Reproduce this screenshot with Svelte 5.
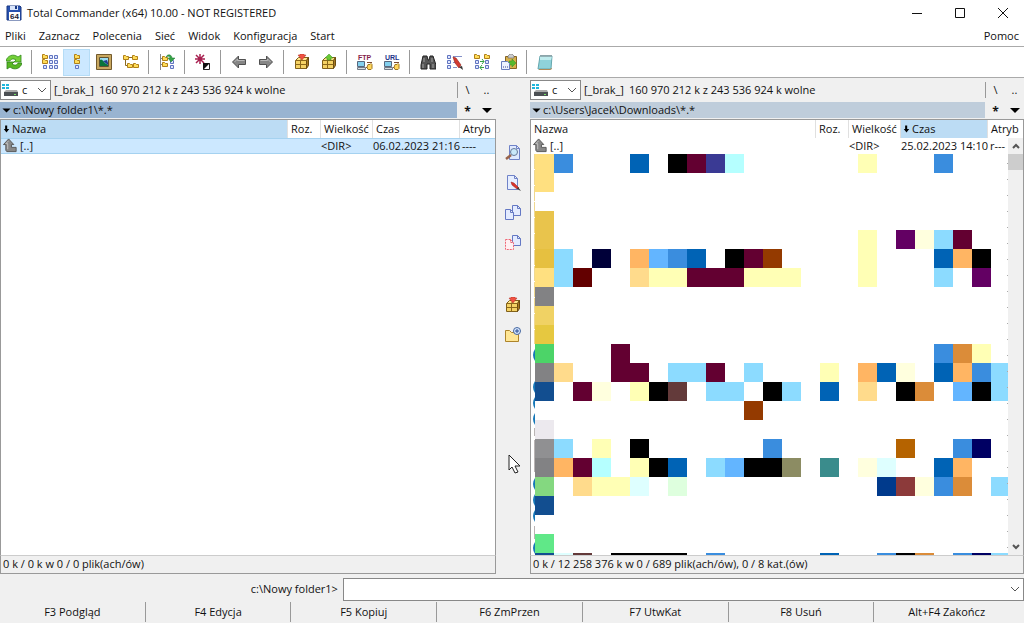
<script>
  let command = $state('')

  const menu = ['Pliki', 'Zaznacz', 'Polecenia', 'Sieć', 'Widok', 'Konfiguracja', 'Start']
  const keys = ['F3 Podgląd', 'F4 Edycja', 'F5 Kopiuj', 'F6 ZmPrzen', 'F7 UtwKat', 'F8 Usuń', 'Alt+F4 Zakończ']

  const toolbar = [
    ['refresh', 'Odśwież'], null,
    ['brief', 'Skrócony'], ['full', 'Pełny'], ['thumbs', 'Miniatury'], ['tree', 'Drzewo'], null,
    ['branch', 'Gałąź'], null,
    ['invert', 'Odwróć zaznaczenie'], null,
    ['back', 'Wstecz'], ['forward', 'Dalej'], null,
    ['pack', 'Spakuj'], ['unpack', 'Rozpakuj'], null,
    ['ftp', 'Połącz FTP'], ['url', 'Nowe FTP'], null,
    ['search', 'Szukaj'], ['rename', 'Wielozmiana nazw'], ['sync', 'Synchronizuj'], ['clip', 'Kopiuj nazwy'], null,
    ['notepad', 'Notatnik']
  ]

  const middle = [
    ['view', 'Podgląd'], ['edit', 'Edycja'], ['copy', 'Kopiuj'], ['move', 'Przenieś'], null,
    ['pack', 'Spakuj'], ['mkdir', 'Utwórz katalog']
  ]

  const panels = [
    { id: 'left', path: 'c:\\Nowy folder1\\*.*', sort: 'Nazwa', date: '06.02.2023 21:16', attr: '----', active: true, status: '0 k / 0 k w 0 / 0 plik(ach/ów)' },
    { id: 'right', path: 'c:\\Users\\Jacek\\Downloads\\*.*', sort: 'Czas', date: '25.02.2023 14:10', attr: 'r---', active: false, status: '0 k / 12 258 376 k w 0 / 689 plik(ach/ów), 0 / 8 kat.(ów)' }
  ]
  const columns = [['Nazwa', 'name'], ['Roz.', 'ext'], ['Wielkość', 'size'], ['Czas', 'time'], ['Atryb', 'attr']]

  // one letter per tile, a dot is an empty tile
  const palette = {
    a: '#ffe080', b: '#e9c44c', c: '#e6c040', d: '#f0d264', e: '#e6c840', g: '#828284', h: '#909092', i: '#ece9ee',
    j: '#4cd468', k: '#84d880', l: '#60e888', n: '#124e90',
    A: '#3a8dde', B: '#0063b5', K: '#000000', M: '#630031', V: '#3a3a94', C: '#b5ffff', Y: '#ffffb5', P: '#630063',
    L: '#ffffde', S: '#8cdbff', N: '#000039', O: '#ffb563', T: '#63b5ff', R: '#943a00', D: '#630000', F: '#ffdb8c',
    G: '#db8c39', W: '#633a3a', Q: '#b56300', U: '#000063', X: '#8c8c63', Z: '#3a8c8c', t: '#deffff', u: '#deffde',
    v: '#003a8c', w: '#8c3a3a'
  }
  const tiles = [
    'aA...B.KMVC......Y...A...',
    'a........................',
    '.........................',
    'b........................',
    'b................Y.PLSM..',
    'cS.N.OTAB.KMR....Y...BOK.',
    'aSD..FYYMMMYYY...Y...S.P.',
    'g........................',
    'd........................',
    'e........................',
    'j...M................AGY.',
    'gF..MM.SSM.S...Y.OBL.BOAS',
    'n.ML.YKW.SS.KS.B.F.KG.TKS',
    '...........R.............',
    'i........................',
    'hS.Y.K......A......Q..AU.',
    'gOMC.YKB.STKKX.Z.Lt..BO..',
    'k.FYYt.u..........vwLAG.S',
    'n........................',
    '.........................',
    'l........................',
    'ntW.KKKK.A.....B..AKG.AUS'
  ]
  const marks = [355, 387, 403, 419, 484, 500, 516, 548]

  // small pieces shared by the icons
  const folder = (x, y) => `<path d="M${x}.5 ${y}.5h2l1 1h2v3h-5z" fill="#ffdc58" stroke="#b08018"/>`
  const page = (x, y) => `<path d="M${x}.5 ${y}.5h3v3h-3z" fill="#dfe6ff" stroke="#6074c0"/>`
  const sheet = (x, y, fill = '#e3ebff', line = '#6478c4', dash = '') => `<path d="M${x}.5 ${y}.5h5l3 3v7h-8z M${x + 5}.5 ${y}.5v3h3" fill="${fill}" stroke="${line}" ${dash}/>`
  const box = '<path d="M1.500 6.500l3-3h10l-2 3v8h-11z" fill="#ffe68c" stroke="#80601a"/><path d="M12.500 6.500l2-3v8l-2 3z" fill="#a87a24" stroke="#6a4c10"/><path d="M2 7h10v3H2zM2 11h10v3H2z" fill="#f5d264"/><path d="M1.500 6.500h11M1.500 10.500h11M7.500 4l-1 3v7.500" stroke="#8c681a" fill="none"/>'
  const net = '<path d="M.500 7.500h7v5h-7z" fill="#83d0ee" stroke="#56677e"/><path d="M.500 13.500h8v2h-8z" fill="#d6dbe1" stroke="#727b86"/><path d="M9 13.500h2M10 8.500h5" stroke="#7a4a30"/><path d="M11 10.500h2l1-1 1 1v4l-1 1h-3l-1-2z" fill="#ffd65c" stroke="#a07820"/>'

  const icons = {
    refresh: '<path d="M0 7C1 2 7-1 12 3l3-2v7H8l2-2C7 4 5 5 4 7z" fill="#74d038" stroke="#318a19" stroke-width=".8"/><path d="M16 9c-1 5-7 8-12 4l-3 2V8h7l-2 2c3 2 5 1 6-1z" fill="#58b824" stroke="#2c8118" stroke-width=".8"/>',
    brief: folder(0, 0) + folder(0, 5) + page(1, 11) + [7, 12].map((x) => page(x, 1) + page(x, 6) + page(x, 11)).join(''),
    full: folder(5, 0) + folder(5, 5) + page(6, 11),
    thumbs: '<path d="M.500 .500h15v15H.500z" fill="#c9a860" stroke="#735a2d"/><path d="M3.500 3.500h9v9h-9z" fill="#9adcf4" stroke="#5d5232"/><path d="M4 12V6c2-2 3 2 8 5v1z" fill="#08743c"/><path d="M7 7l4-1 1 3v2z" fill="#203c8c"/>',
    tree: '<path d="M2.500 5v6.500H5M3 3.500h7M8.500 11.500H11" stroke="#8a6a20" fill="none"/>' + folder(0, 1) + folder(9, 1) + folder(4, 9) + folder(10, 9),
    branch: '<path d="M1.500 0v16M2 4.500h2M2 10.500h2" stroke="#888" fill="none"/>' + folder(3, 2) + folder(3, 8) + page(11, 6) + page(11, 11) + '<path d="M7 3c2-4 6-2 6 1h3l-4 4-3-4h2c0-2-2-2-4-1z" fill="#36a247" stroke="#1c7a30" stroke-width=".5"/>',
    invert: '<path d="M5 0v10M0 5h10M1 1l8 8M9 1L1 9" stroke="#a82050" stroke-width="1.500"/><circle cx="5" cy="5" r="2" fill="#a82050"/><path d="M8.500 9.500h6v6h-6z" fill="#fff" stroke="#222"/><path d="M8 16V9h7z" fill="#111"/>',
    back: '<path d="M1.500 8l6-6v3.500h7v5h-7V14z" fill="#868686" stroke="#505050"/><path d="M3.500 8l3-3v1.500h7" stroke="#b8b8b8" fill="none"/>',
    forward: '<path d="M14.500 8l-6-6v3.500h-7v5h7V14z" fill="#868686" stroke="#505050"/><path d="M2.500 6.500h7V5l3 3" stroke="#b8b8b8" fill="none"/>',
    pack: box + '<path d="M4 1h2V0h4v1h2L8 6z" fill="#ef5142" stroke="#b73025" stroke-width=".5"/>',
    unpack: box + '<path d="M8 0l4 4h-2v2H6V4H4z" fill="#6bc934" stroke="#378d20" stroke-width=".5"/>',
    ftp: net + '<text x="1" y="6" font-size="7" font-weight="bold" font-family="Liberation Sans" fill="#851e4b">FTP</text>',
    url: net + '<text x="1" y="6" font-size="7" font-weight="bold" font-family="Liberation Sans" fill="#24358a">URL</text>',
    search: '<path d="M3 2h4l1 4h1l1-4h3l3 9v4h-6v-5H7v5H1v-4z" fill="#555" stroke="#222"/><path d="M4 4v4M12 4v4M3 10v4M13 10v4" stroke="#a2a2a2"/>',
    rename: page(0, 1) + page(0, 6) + page(0, 11) + '<path d="M6 2.500h9M6 8.500h2M6 13.500h4" stroke="#8490c8"/><path d="M6 3l3 1 5 7-2 3-4-5z" fill="#d33b31" stroke="#912018" stroke-width=".6"/><path d="M12 13l4 3-1-4z" fill="#333"/>',
    sync: folder(0, 0) + folder(10, 0) + [6, 11].map((y) => page(1, y) + page(11, y)).join('') + '<path d="M6 7.500h4M8 5l2 2.500L8 10M10 13.500H6M8 11l-2 2.500L8 16" fill="none" stroke="#35a346"/>',
    clip: '<path d="M4.500 2.500h11v12h-11z" fill="#d8b04c" stroke="#866322"/><path d="M7 4V2l2-2h2l2 2v2z" fill="#ccc" stroke="#666" stroke-width=".6"/><path d="M8 7h3V5l4 4-4 4v-2H8z" fill="#56b92c" stroke="#378d20" stroke-width=".5"/><path d="M.500 7.500h6l2 2v6h-8z" fill="#edf2ff" stroke="#687bbd"/><path d="M2 13h5" stroke="#39408b" stroke-dasharray="1 1"/>',
    notepad: '<path d="M3 2h12l-1 13H1z" fill="#8fd2da" stroke="#65a7ae"/><path d="M3 2h12l-1 4H3z" fill="#bfecee"/><path d="M4 1v2M6 1v2M8 1v2M10 1v2M12 1v2M14 1v2" stroke="#66777c"/><path d="M2 15.500h11l2-1" fill="none" stroke="#b18a57"/>',
    view: '<path d="M4.500 .500h7l3 3v11h-10z M11.500 .500v3h3" fill="#dfe9ff" stroke="#6f82c8"/><circle cx="9" cy="7" r="3.500" fill="#c9e8fa" stroke="#667998"/><path d="M6 10l-5 4" stroke="#98634a" stroke-width="2.500"/>',
    edit: '<path d="M2.500 .500h7l3 3v11h-10z M9.500 .500v3h3" fill="#e6eeff" stroke="#6f82c8"/><path d="M6 7l3 1 5 5-2 1-5-4z" fill="#da332b" stroke="#9a211b" stroke-width=".5"/><path d="M13 12l3 4-4-2z" fill="#333"/>',
    copy: sheet(7, 0) + sheet(0, 4),
    move: sheet(7, 0) + sheet(0, 4, '#fff0f2', '#ef6675', 'stroke-dasharray="2 1"'),
    mkdir: '<path d="M.500 3.500h4l2 2h7v9h-13z" fill="#ffe694" stroke="#ad842b"/><circle cx="12" cy="4" r="3.500" fill="#d8e8ff" stroke="#45669e"/><path d="M12 2v4M10 4h4" stroke="#294c94"/>',
    up: '<path d="M6 1l5.500 6H9v3h5v4.500H4L3 13V7H.500z" fill="#888" stroke="#555"/><path d="M6 3L3 6h2v6" fill="none" stroke="#c4c4c4"/>',
    drive: '<path d="M0 1h3v2H0zM4 1h3v2H4zM0 4h3v2H0zM4 4h3v2H4z" fill="#20b6dc"/><path d="M2 9l2-2h11l1 2z" fill="#aaa"/><path d="M2 9h14v4H2z" fill="#4c5054"/><path d="M12 11.500h2" stroke="#79e66a"/>',
    disk: '<path d="M1 1h13l1 1v13H1z" fill="#2852b0" stroke="#183782"/><path d="M4 1h8v4H4z" fill="#d9e5fa"/><path d="M9 1h2v3H9z" fill="#183782"/><path d="M3 7h11v8H3z" fill="#fff"/><text x="4" y="14" font-size="8" font-weight="bold" font-family="Liberation Sans" fill="#223">64</text>',
    down: '<path d="M4 6l4 4 4-4" fill="none" stroke="#555"/>',
    scrollUp: '<path d="M5 10l3-3 3 3" fill="none" stroke="#555" stroke-width="2"/>',
    scrollDown: '<path d="M5 6l3 3 3-3" fill="none" stroke="#555" stroke-width="2"/>',
    triangle: '<path d="M3 6h10l-5 5z" fill="#000"/>',
    sorted: '<path d="M6 3h3v5h3l-4 5-4-5h2z" fill="#000"/>',
    minimize: '<path d="M3 8.500h10" stroke="#111"/>',
    maximize: '<path d="M3.500 3.500h9v9h-9z" fill="none" stroke="#111"/>',
    close: '<path d="M3 3l10 10M13 3L3 13" stroke="#111"/>'
  }
</script>

{#snippet icon(name)}
  <svg class="icon" viewBox="0 0 16 16" aria-hidden="true">{@html icons[name]}</svg>
{/snippet}

{#snippet filePanel(panel)}
  <section class="panel">
    <div class="drivebar">
      <div class="drive">
        {@render icon('drive')}
        <select aria-label="Dysk"><option>c</option></select>
        <span class="chevron">{@render icon('down')}</span>
      </div>
      <span class="free"><span>[_brak_]</span> <span>160 970 212 k z 243 536 924 k wolne</span></span>
      <div class="pair divided"><button>\</button><button>..</button></div>
    </div>
    <div class="pathbar">
      <button class="path" class:active={panel.active}>{@render icon('triangle')}{panel.path}</button>
      <div class="pair"><button class="star">*</button><button aria-label="Historia">{@render icon('triangle')}</button></div>
    </div>
    <div class="list">
      <table>
        <thead>
          <tr>
            {#each columns as [label, kind]}
              <th class={kind} class:sorted={panel.sort === label}>{#if panel.sort === label}{@render icon('sorted')}{/if}{label}</th>
            {/each}
          </tr>
        </thead>
        <tbody>
          <tr class:selected={panel.active}>
            <td>{@render icon('up')}[..]</td>
            <td></td>
            <td>&lt;DIR&gt;</td>
            <td>{panel.date}</td>
            <td>{panel.attr}</td>
          </tr>
        </tbody>
      </table>
      {#if panel.id === 'right'}
        <svg class="tiles" width="477" height="401" viewBox="531 154 477 401" shape-rendering="crispEdges" aria-hidden="true">
          <path d="M534.500 154V344" stroke="#f0d890" stroke-dasharray="15 1" />
          <path d="M534.500 428v8M534.500 440v32M534.500 526v13" stroke="#b9b4b4" />
          {#each marks as y}
            <path d="M535 {y - 6}q-4 6 0 12z" fill="#1477b8" shape-rendering="auto" />
          {/each}
          {#each tiles as row, r}
            {#each row as tile, c}
              {#if tile !== '.'}
                <rect x={535 + c * 19} y={154 + r * 19} width="19" height="19" fill={palette[tile]} />
              {/if}
            {/each}
          {/each}
          <path d="M1007.500 163V555" stroke="#aaa" stroke-dasharray="1 15" />
        </svg>
        <div class="scrollbar">
          <button aria-label="W górę">{@render icon('scrollUp')}</button>
          <div class="thumb"></div>
          <button aria-label="W dół">{@render icon('scrollDown')}</button>
        </div>
      {/if}
    </div>
    <div class="status">{panel.status}</div>
  </section>
{/snippet}

<div class="window">
  <header>
    {@render icon('disk')}
    <span class="title">Total Commander (x64) 10.00 - NOT REGISTERED</span>
    <button aria-label="Minimalizuj">{@render icon('minimize')}</button>
    <button aria-label="Maksymalizuj">{@render icon('maximize')}</button>
    <button aria-label="Zamknij">{@render icon('close')}</button>
  </header>

  <nav>
    {#each menu as item}
      <button>{item}</button>
    {/each}
    <button class="help">Pomoc</button>
  </nav>

  <div class="toolbar">
    {#each toolbar as tool}
      {#if tool}
        <button class:pressed={tool[0] === 'full'} aria-label={tool[1]}>{@render icon(tool[0])}</button>
      {:else}
        <span class="separator"></span>
      {/if}
    {/each}
  </div>

  <main>
    {@render filePanel(panels[0])}
    <div class="middle">
      {#each middle as tool}
        {#if tool}
          <button aria-label={tool[1]}>{@render icon(tool[0])}</button>
        {:else}
          <span class="space"></span>
        {/if}
      {/each}
      <svg class="pointer" width="13" height="20" viewBox="0 0 13 20" aria-hidden="true">
        <path d="M1 1v15l3-3 3 6 3-1-3-6h5z" fill="#fff" stroke="#222" />
      </svg>
    </div>
    {@render filePanel(panels[1])}
  </main>

  <div class="commandline">
    <label for="command">c:\Nowy folder1&gt;</label>
    <div class="field">
      <input id="command" type="text" bind:value={command} />
      <button aria-label="Historia poleceń">{@render icon('down')}</button>
    </div>
  </div>

  <footer>
    {#each keys as key}
      <button>{key}</button>
    {/each}
  </footer>
</div>

<style>
  :global(body) {
    background: #f0f0f0;
  }
  .window {
    display: flex;
    flex-direction: column;
    min-height: 100vh;
    font: 11px/16px "Open Sans", "Noto Sans", sans-serif;
    color: #111;
    background: #f0f0f0;
  }
  .window * {
    box-sizing: border-box;
  }
  button, select, input {
    margin: 0;
    padding: 0;
    border: none;
    border-radius: 0;
    background: none;
    font: inherit;
    color: inherit;
  }
  .icon {
    display: block;
    flex: none;
    width: 16px;
    height: 16px;
  }
  header {
    display: flex;
    align-items: center;
    height: 26px;
    padding-left: 6px;
    background: #fff;
  }
  .title {
    flex: 1;
    padding-left: 5px;
  }
  header button {
    display: flex;
    justify-content: center;
    width: 43px;
  }
  nav {
    display: flex;
    gap: 13px;
    height: 21px;
    padding: 0 5px;
    border-bottom: 1px solid #aaa;
    background: #fff;
  }
  .help {
    margin-left: auto;
  }
  .toolbar {
    display: flex;
    align-items: center;
    height: 31px;
    border-bottom: 1px solid #aaa;
    background: #fff;
  }
  .toolbar button {
    display: flex;
    align-items: center;
    justify-content: center;
    width: 27px;
    height: 27px;
  }
  .toolbar .pressed {
    border: 1px solid #b5dcf6;
    background: #cce8ff;
  }
  .separator {
    width: 1px;
    height: 24px;
    margin: 0 4px;
    background: #999;
  }
  main {
    flex: 1;
    display: grid;
    grid-template-columns: calc(50% - 16px) 34px 1fr;
  }
  .panel {
    display: flex;
    flex-direction: column;
    min-width: 0;
  }
  .drivebar {
    display: flex;
    align-items: center;
    height: 24px;
  }
  .drive {
    position: relative;
    width: 51px;
    height: 20px;
    border: 1px solid #888;
    background: #fff;
  }
  .drive > .icon {
    position: absolute;
    top: 2px;
    left: 1px;
    pointer-events: none;
  }
  .drive select {
    width: 100%;
    height: 100%;
    padding-left: 21px;
    appearance: none;
  }
  .chevron {
    position: absolute;
    top: 1px;
    right: 0;
    pointer-events: none;
  }
  .free {
    flex: 1;
    display: flex;
    gap: 5px;
    padding-left: 3px;
    white-space: nowrap;
  }
  .pair {
    display: flex;
    width: 39px;
    padding-left: 1px;
  }
  .divided {
    border-left: 1px solid #999;
    padding-left: 0;
  }
  .pair button {
    display: flex;
    align-items: center;
    justify-content: center;
    width: 19px;
    height: 16px;
  }
  .pair .star {
    padding-top: 4px;
    font-size: 12px;
    font-weight: bold;
  }
  .pathbar {
    display: flex;
    height: 17px;
  }
  .path {
    flex: 1;
    display: flex;
    align-items: center;
    height: 16px;
    background: #bfcddb;
  }
  .path.active {
    background: #99b4d1;
  }
  .path .icon {
    width: 13px;
  }
  .list {
    flex: 1;
    position: relative;
    overflow: hidden;
    border: 1px solid #999;
    border-bottom-color: #ccc;
    background: #fff;
  }
  table {
    width: 100%;
    table-layout: fixed;
    border-spacing: 0;
  }
  th {
    height: 18px;
    padding: 0 3px;
    border-right: 1px solid #e0e0e0;
    text-align: left;
    font-weight: normal;
    white-space: nowrap;
  }
  th:last-child {
    border-right: none;
  }
  th.sorted {
    padding-left: 0;
    background: #bcdcf4;
  }
  th .icon, td .icon {
    display: inline-block;
    vertical-align: top;
  }
  th .icon {
    width: 11px;
  }
  .ext {
    width: 33px;
  }
  .size {
    width: 52px;
  }
  .time {
    width: 87px;
  }
  .attr {
    width: 35px;
  }
  td {
    height: 16px;
    padding: 0;
    white-space: nowrap;
  }
  td:first-child, td:last-child {
    padding-left: 2px;
  }
  td .icon {
    width: 15px;
    height: 15px;
    margin-right: 2px;
  }
  .selected td {
    background: #cce8ff;
    box-shadow: inset 0 1px #a5d2f0, inset 0 -1px #a5d2f0;
  }
  .tiles {
    display: block;
  }
  .scrollbar {
    position: absolute;
    top: 18px;
    right: 0;
    bottom: 0;
    display: flex;
    flex-direction: column;
    width: 15px;
    background: #f0f0f0;
  }
  .scrollbar button {
    display: flex;
    justify-content: center;
    width: 15px;
  }
  .scrollbar button:last-child {
    margin-top: auto;
  }
  .thumb {
    height: 16px;
    background: #cdcdcd;
  }
  .status {
    height: 18px;
    padding-left: 2px;
    border: 1px solid #999;
    border-top: none;
    white-space: nowrap;
  }
  .middle {
    position: relative;
    display: flex;
    flex-direction: column;
    align-items: center;
    padding-top: 60px;
  }
  .middle button {
    display: flex;
    align-items: center;
    justify-content: center;
    width: 30px;
    height: 30px;
  }
  .space {
    height: 32px;
  }
  .pointer {
    position: absolute;
    top: 376px;
    left: 12px;
  }
  .commandline {
    display: flex;
    align-items: center;
    gap: 5px;
    height: 28px;
    padding-top: 2px;
  }
  .commandline label {
    width: 33%;
    text-align: right;
  }
  .field {
    flex: 1;
    display: flex;
    align-items: center;
    height: 23px;
    border: 1px solid #888;
    background: #fff;
  }
  .field input {
    flex: 1;
    height: 100%;
    padding: 0 4px;
    outline: none;
  }
  footer {
    display: flex;
    height: 21px;
    padding: 0 5px 1px 0;
  }
  footer button {
    flex: 1;
    border-right: 1px solid #999;
  }
  footer button:last-child {
    border-right: none;
  }
</style>
